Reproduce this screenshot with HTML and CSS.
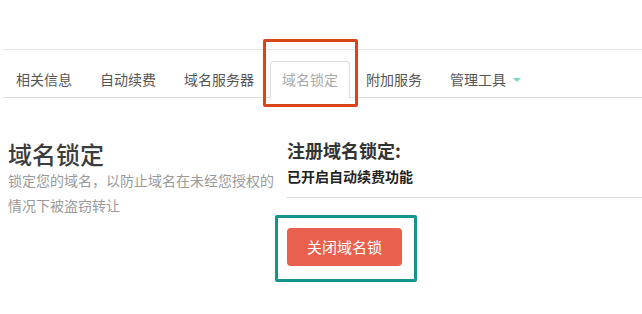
FILE: index.html
```html
<!DOCTYPE html>
<html lang="zh-CN">
<head>
<meta charset="utf-8">
<title>域名锁定</title>
<link rel="stylesheet" href="styles.css">
</head>
<body>
<div class="page">
  <div class="nav-wrap">
    <ul class="tabs">
      <li class="tab"><a>相关信息</a></li>
      <li class="tab"><a>自动续费</a></li>
      <li class="tab"><a>域名服务器</a></li>
      <li class="tab active"><a>域名锁定</a><span class="mark mark-red"></span></li>
      <li class="tab"><a>附加服务</a></li>
      <li class="tab"><a>管理工具 <span class="caret"></span></a></li>
    </ul>
  </div>
  <div class="content">
    <div class="col-left">
      <h2 class="title">域名锁定</h2>
      <p class="desc">锁定您的域名，以防止域名在未经您授权的情况下被盗窃转让</p>
    </div>
    <div class="col-right">
      <h3 class="sub-title">注册域名锁定:</h3>
      <p class="status">已开启自动续费功能</p>
      <div class="divider"></div>
      <div class="btn-wrap">
        <button class="btn-danger">关闭域名锁</button>
        <span class="mark mark-teal"></span>
      </div>
    </div>
  </div>
</div>
</body>
</html>
```
FILE: styles.css
```css
html, body {
  margin: 0;
  padding: 0;
  background: #fff;
}
body {
  font-family: "Noto Sans CJK SC", "Liberation Sans", sans-serif;
  font-size: 14px;
  color: #333;
}
.page {
  padding-top: 49px;
  padding-bottom: 40px;
}
.nav-wrap {
  margin-left: 3px;
  border-top: 1px solid #e3e3e3;
  padding-top: 11px;
}
.tabs {
  list-style: none;
  margin: 0;
  padding: 0 0 0 1px;
  display: flex;
  border-bottom: 1px solid #ddd;
}
.tab {
  position: relative;
  margin-right: 4px;
  margin-bottom: -1px;
}
.tab a {
  display: block;
  padding: 7px 11px 8px;
  line-height: 20px;
  font-size: 14px;
  color: #555;
  border: 1px solid transparent;
  border-radius: 4px 4px 0 0;
}
.tab.active a {
  color: #a9a9a9;
  border-color: #ddd;
  border-bottom-color: #fff;
  background: #fff;
}
.caret {
  display: inline-block;
  width: 0;
  height: 0;
  margin-left: 4px;
  vertical-align: 3px;
  border-left: 4px solid transparent;
  border-right: 4px solid transparent;
  border-top: 4px solid #7dd3c6;
}
.mark {
  position: absolute;
  box-sizing: border-box;
  border-radius: 2px;
  pointer-events: none;
}
.mark-red {
  left: -7px;
  top: -22px;
  right: -8px;
  bottom: -9px;
  border: 3px solid #d9431a;
}
.content {
  display: grid;
  grid-template-columns: 279px 1fr;
  padding-left: 8px;
  padding-top: 40px;
}
.title {
  margin: 2px 0 0;
  font-size: 24px;
  line-height: 28px;
  font-weight: 500;
  color: #3c3c3c;
}
.desc {
  margin: 0;
  font-size: 14px;
  line-height: 25px;
  color: #9a9a9a;
}
.sub-title {
  margin: 0;
  font-size: 18px;
  line-height: 24px;
  font-weight: 700;
  color: #333;
}
.status {
  margin: 4px 0 0;
  font-size: 14px;
  line-height: 20px;
  font-weight: 700;
  color: #222;
}
.col-right {
  display: flex;
  flex-direction: column;
  align-items: flex-start;
}
.divider {
  align-self: stretch;
  margin-top: 11px;
  border-top: 1px solid #ddd;
}
.btn-wrap {
  position: relative;
  margin-top: 30px;
}
.btn-danger {
  display: block;
  height: 38px;
  padding: 0 20px;
  width: 115px;
  border: none;
  border-radius: 4px;
  background: #e9604f;
  color: #fff;
  font-family: "Noto Sans CJK SC", "Liberation Sans", sans-serif;
  font-size: 15px;
  line-height: 38px;
}
.mark-teal {
  left: -12px;
  top: -13px;
  right: -15px;
  bottom: -16px;
  border: 3px solid #13958b;
}
```
